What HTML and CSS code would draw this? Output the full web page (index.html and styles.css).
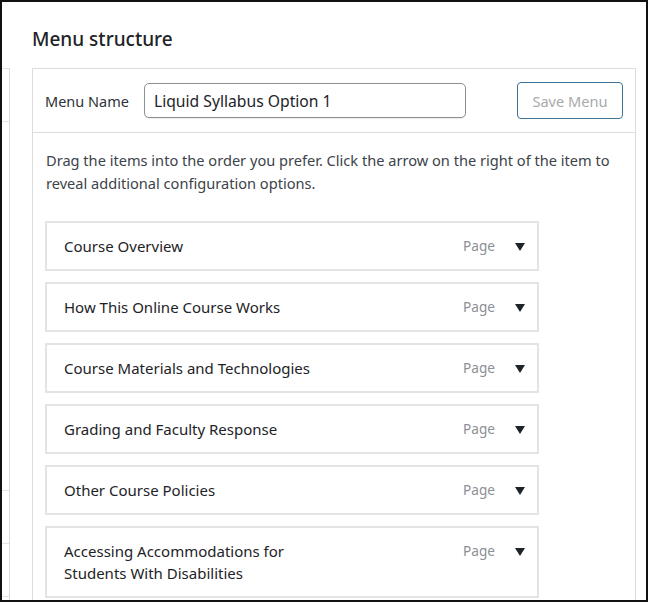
FILE: index.html
```html
<!DOCTYPE html>
<html>
<head>
    <meta charset='utf-8'>
    <title>Menu structure</title>
    <link rel="stylesheet" href="styles.css">
</head>
<body>
    <div class='frame'>
        <div class='sidebar'>
            <div class='side-row first'></div>
            <div class='side-row tall'></div>
            <div class='side-row'></div>
            <div class='side-row'></div>
        </div>
        <div class='main'>
            <h2 class='title'>Menu structure</h2>
            <div class='box'>
                <div class='box-header'>
                    <label class='name-label' for="menu-name">Menu Name</label>
                    <input class='name-input' id="menu-name" type="text" value="Liquid Syllabus Option 1">
                    <div class='save-button'>Save Menu</div>
                </div>
                <div class='box-body'>
                    <p class='hint'>Drag the items into the order you prefer. Click the arrow on the right of the item to reveal additional configuration options.</p>
                    <div class='items'>
                        <div class='item'>
                            <span class='item-title'>Course Overview</span>
                            <span class='item-type'>Page</span>
                            <span class='arrow'></span>
                        </div>
                        <div class='item'>
                            <span class='item-title'>How This Online Course Works</span>
                            <span class='item-type'>Page</span>
                            <span class='arrow'></span>
                        </div>
                        <div class='item'>
                            <span class='item-title'>Course Materials and Technologies</span>
                            <span class='item-type'>Page</span>
                            <span class='arrow'></span>
                        </div>
                        <div class='item'>
                            <span class='item-title'>Grading and Faculty Response</span>
                            <span class='item-type'>Page</span>
                            <span class='arrow'></span>
                        </div>
                        <div class='item'>
                            <span class='item-title'>Other Course Policies</span>
                            <span class='item-type'>Page</span>
                            <span class='arrow'></span>
                        </div>
                        <div class='item'>
                            <span class='item-title'>Accessing Accommodations for<br>Students With Disabilities</span>
                            <span class='item-type'>Page</span>
                            <span class='arrow'></span>
                        </div>
                    </div>
                </div>
            </div>
        </div>
    </div>
</body>
</html>
```

FILE: styles.css
```css
body {
    margin: 0;
    padding: 0;
    background: #fff;
    font-family: "Noto Sans", "Open Sans", sans-serif;
    color: #1d2327;
}
.frame {
    width: 644px;
    height: 598px;
    border: 2px solid #111;
    display: flex;
    overflow: hidden;
}
.sidebar {
    width: 7px;
    margin-top: 66px;
    border-top: 1px solid #e4e4e4;
    border-right: 1px solid #dcdcde;
    flex-shrink: 0;
}
.side-row {
    height: 52px;
    border-bottom: 1px solid #e4e4e4;
}
.side-row.tall {
    height: 368px;
}
.main {
    margin-left: 22px;
    width: 604px;
}
.title {
    margin: 0;
    height: 66px;
    padding-top: 24px;
    box-sizing: border-box;
    font-size: 19px;
    font-weight: 500;
    line-height: 26px;
    color: #1d2327;
}
.box {
    border: 1px solid #dcdcde;
    border-bottom: none;
    height: 540px;
}
.box-header {
    display: flex;
    align-items: center;
    height: 63px;
    padding: 0 12px;
    border-bottom: 1px solid #dcdcde;
}
.name-label {
    font-size: 14.5px;
    color: #2c3338;
    margin-right: 15px;
}
.name-input {
    width: 322px;
    height: 35px;
    box-sizing: border-box;
    border: 1px solid #8c8f94;
    border-radius: 5px;
    padding: 0 9px;
    font-family: inherit;
    font-size: 15.7px;
    color: #1d2327;
    box-shadow: 0 1px 1px rgba(0, 0, 0, 0.08);
}
.save-button {
    margin-left: auto;
    width: 106px;
    height: 37px;
    box-sizing: border-box;
    border: 1px solid #3e7596;
    border-radius: 4px;
    display: flex;
    justify-content: center;
    align-items: center;
    font-size: 14.6px;
    color: #a7aaad;
}
.box-body {
    padding: 16px 12px;
}
.hint {
    margin: 0 0 26px 1px;
    font-size: 14.6px;
    line-height: 23px;
    color: #3c434a;
}
.items {
    display: flex;
    flex-direction: column;
    gap: 11px;
    width: 494px;
}
.item {
    display: flex;
    align-items: flex-start;
    box-sizing: border-box;
    min-height: 50px;
    padding: 12px 12px 12px 17px;
    border: 2px solid #e4e4e4;
    background: #fff;
    font-size: 15px;
    line-height: 22px;
}
.item-title {
    flex: 1;
    color: #1d2327;
}
.item-type {
    font-size: 13.6px;
    color: #8c8f94;
    margin-right: 20px;
}
.arrow {
    width: 0;
    height: 0;
    margin-top: 8px;
    border-left: 5px solid transparent;
    border-right: 5px solid transparent;
    border-top: 8px solid #1d2327;
}
```
